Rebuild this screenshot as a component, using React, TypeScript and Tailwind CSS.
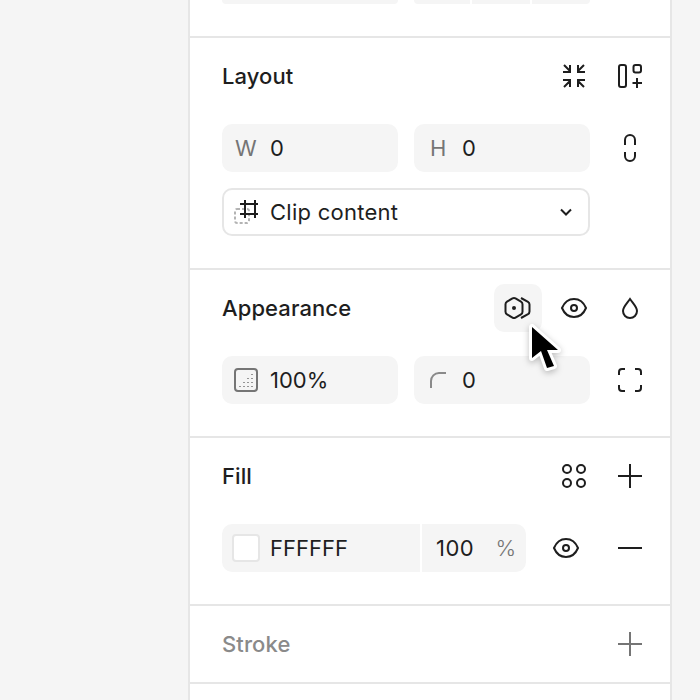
import type { ReactNode } from 'react';

const font = { fontFamily: 'Inter, "Liberation Sans", sans-serif' };

function Svg({ children, className = 'text-[#1e1e1e]' }: { children: ReactNode; className?: string }) {
  return (
    <svg width="28" height="28" viewBox="0 0 28 28" fill="none" stroke="currentColor" strokeWidth="2" className={className}>
      {children}
    </svg>
  );
}

function IconButton({ children, active }: { children: ReactNode; active?: boolean }) {
  return (
    <div className={`w-12 h-12 flex items-center justify-center rounded-[10px] shrink-0 ${active ? 'bg-[#f5f5f5]' : ''}`}>
      {children}
    </div>
  );
}

function Field({ children, className = 'flex-1' }: { children: ReactNode; className?: string }) {
  return <div className={`h-12 bg-[#f5f5f5] rounded-[10px] flex items-center text-[22px] text-[#1e1e1e] ${className}`}>{children}</div>;
}

const EyeIcon = () => (
  <Svg>
    <path d="M2 14C4.500 8 9 5 14 5s9.500 3 12 9c-2.500 6-7 9-12 9S4.500 20 2 14Z" />
    <circle cx="14" cy="14" r="3" />
  </Svg>
);

const PlusIcon = ({ className }: { className?: string }) => (
  <Svg className={className}>
    <path d="M14 2v24M2 14h24" />
  </Svg>
);

function Header({ title, muted, children }: { title: string; muted?: boolean; children: ReactNode }) {
  return (
    <div className="h-12 flex items-center">
      <div className={`flex-1 text-[22px] font-medium tracking-[0.1px] ${muted ? 'text-[#8a8a8a]' : 'text-[#1e1e1e]'}`}>{title}</div>
      <div className="flex gap-2">{children}</div>
    </div>
  );
}

function Section({ children, collapsed }: { children: ReactNode; collapsed?: boolean }) {
  return (
    <div className={`pl-8 pr-4 pt-[14px] border-b-2 border-[#e6e6e6] ${collapsed ? 'pb-[14px]' : 'pb-8'}`}>{children}</div>
  );
}

function Cursor() {
  return (
    <svg width="44" height="60" viewBox="0 0 44 60" className="absolute left-[522px] top-[316px] drop-shadow-[0_2px_3px_rgba(0,0,0,0.25)]">
      <path
        d="M10 11V42L19 35L25 52L32 50L25 34H36Z"
        fill="#000"
        stroke="#fff"
        strokeWidth="6"
        strokeLinejoin="round"
        paintOrder="stroke"
      />
    </svg>
  );
}

export default function App() {
  return (
    <div className="relative w-[700px] h-[700px] overflow-hidden bg-[#f5f5f5]" style={font}>
      <div className="ml-[188px] w-[484px] h-[700px] bg-white border-x-2 border-[#e6e6e6]">
        {/* Cut off section above Layout */}
        <div className="pl-8 pr-[80px] h-[38px] border-b-2 border-[#e6e6e6]">
          <div className="flex gap-4 h-1">
            <div className="w-44 bg-[#f5f5f5] rounded-b-[10px]" />
            <div className="w-44 flex gap-0.5">
              <div className="w-[56px] bg-[#f5f5f5] rounded-bl-[10px]" />
              <div className="w-[58px] bg-[#f5f5f5]" />
              <div className="w-[58px] bg-[#f5f5f5] rounded-br-[10px]" />
            </div>
          </div>
        </div>

        <Section>
          <Header title="Layout">
            <IconButton>
              <Svg>
                <path d="M4 3l6 6M10 3v7H3M24 3l-6 6M18 3v7h7M4 25l6-6M10 25v-7H3M24 25l-6-6M18 25v-7h7" />
              </Svg>
            </IconButton>
            <IconButton>
              <Svg>
                <rect x="3" y="3" width="7" height="22" rx="2" />
                <rect x="17.500" y="3" width="7.500" height="7.500" rx="2" />
                <path d="M21 16v10M16.500 21h9.500" />
              </Svg>
            </IconButton>
          </Header>
          <div className="mt-6 flex gap-4">
            <Field>
              <span className="w-12 pl-[13px] text-[#757575]">W</span>
              <span>0</span>
            </Field>
            <Field>
              <span className="w-12 pl-4 text-[#757575]">H</span>
              <span>0</span>
            </Field>
            <IconButton>
              <Svg>
                <path d="M9 11V6a5 5 0 0 1 10 0v5M9 18v4a5 5 0 0 0 10 0v-4" />
              </Svg>
            </IconButton>
          </div>
          <div className="mt-4 mr-16 h-12 rounded-[10px] border-2 border-[#e6e6e6] flex items-center text-[22px] text-[#1e1e1e]">
            <div className="w-[46px] pl-[10px] shrink-0">
              <svg width="26" height="28" viewBox="0 0 26 28" fill="none">
                <rect x="1" y="11" width="14" height="14" rx="2" stroke="#b3b3b3" strokeWidth="2" strokeDasharray="3 2" />
                <path d="M11 2v18M21 2v18M6 6h18M6 16h18" stroke="#1e1e1e" strokeWidth="2" />
              </svg>
            </div>
            <span className="flex-1 tracking-[0.25px]">Clip content</span>
            <svg width="12" height="8" viewBox="0 0 12 8" fill="none" stroke="#1e1e1e" strokeWidth="2" className="mr-4">
              <path d="M1 1.500l5 5 5-5" />
            </svg>
          </div>
        </Section>

        <Section>
          <Header title="Appearance">
            <IconButton active>
              <Svg>
                <path d="M8.500 4.400a3 3 0 0 1 3 0l5.500 3.200a3 3 0 0 1 1.500 2.600v7.600a3 3 0 0 1-1.500 2.600l-5.500 3.200a3 3 0 0 1-3 0l-5.500-3.200a3 3 0 0 1-1.500-2.600v-7.600a3 3 0 0 1 1.500-2.600Z" />
                <circle cx="10" cy="14" r="2" fill="currentColor" stroke="none" />
                <path d="M17 4l7 3.800a3 3 0 0 1 1.500 2.600v7.200a3 3 0 0 1-1.500 2.600l-7 3.800" />
              </Svg>
            </IconButton>
            <IconButton>
              <EyeIcon />
            </IconButton>
            <IconButton>
              <Svg>
                <path d="M14 5c-3 4.500-7 8-7 12a7 7 0 0 0 14 0c0-4-4-7.500-7-12Z" />
              </Svg>
            </IconButton>
          </Header>
          <div className="mt-6 flex gap-4">
            <Field>
              <div className="w-12 pl-3 shrink-0">
                <svg width="24" height="24" viewBox="0 0 24 24" fill="none">
                  <rect x="1" y="1" width="22" height="22" rx="3" stroke="#757575" strokeWidth="2" />
                  <path d="M18 6v1M18 10v1M18 14v1M18 18v1M14 10v1M14 14v1M14 18v1M10 14v1M10 18v1M6 18v1" stroke="#757575" strokeWidth="1.500" />
                </svg>
              </div>
              <span>100%</span>
            </Field>
            <Field>
              <div className="w-12 pl-4 shrink-0">
                <svg width="16" height="16" viewBox="0 0 16 16" fill="none" stroke="#8a8a8a" strokeWidth="2" className="-mt-px">
                  <path d="M1 16V9a8 8 0 0 1 8-8h7" />
                </svg>
              </div>
              <span>0</span>
            </Field>
            <IconButton>
              <Svg>
                <path d="M3 9V6a3 3 0 0 1 3-3h3M19 3h3a3 3 0 0 1 3 3v3M25 19v3a3 3 0 0 1-3 3h-3M9 25H6a3 3 0 0 1-3-3v-3" />
              </Svg>
            </IconButton>
          </div>
        </Section>

        <Section>
          <Header title="Fill">
            <IconButton>
              <Svg>
                <circle cx="7" cy="7" r="4" />
                <circle cx="21" cy="7" r="4" />
                <circle cx="7" cy="21" r="4" />
                <circle cx="21" cy="21" r="4" />
              </Svg>
            </IconButton>
            <IconButton>
              <PlusIcon />
            </IconButton>
          </Header>
          <div className="mt-6 flex gap-4">
            <div className="flex-1 flex gap-0.5">
              <Field className="w-[198px] rounded-r-none">
                <div className="w-12 pl-[10px] shrink-0">
                  <div className="w-7 h-7 bg-white rounded-[4px] border-2 border-[#e6e6e6]" />
                </div>
                <span>FFFFFF</span>
              </Field>
              <Field className="flex-1 rounded-l-none">
                <span className="flex-1 pl-[14px] tracking-[0.5px]">100</span>
                <span className="pr-[10px] text-[#757575] font-light">%</span>
              </Field>
            </div>
            <IconButton>
              <EyeIcon />
            </IconButton>
            <IconButton>
              <Svg>
                <path d="M2 14h24" />
              </Svg>
            </IconButton>
          </div>
        </Section>

        <Section collapsed>
          <Header title="Stroke" muted>
            <IconButton>
              <PlusIcon className="text-[#757575]" />
            </IconButton>
          </Header>
        </Section>
      </div>
      <Cursor />
    </div>
  );
}
